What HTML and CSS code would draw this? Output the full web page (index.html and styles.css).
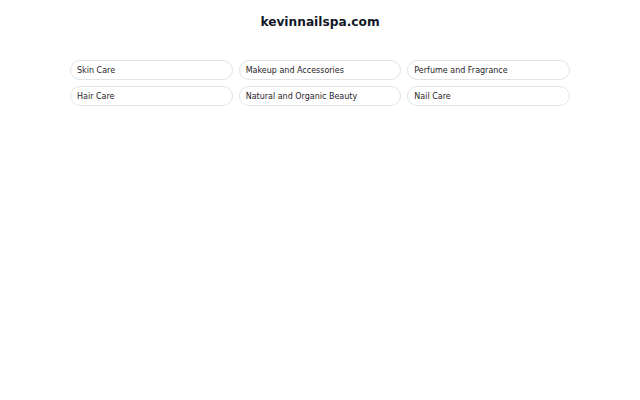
FILE: index.html
```html
<!DOCTYPE html>
<html lang="en">
<head>
<meta charset="utf-8">
<title>kevinnailspa.com</title>
<link rel="stylesheet" href="styles.css">
</head>
<body>
<header class="header">
  <h1 class="title">kevinnailspa.com</h1>
</header>
<main class="grid">
  <a class="pill" href="#">Skin Care</a>
  <a class="pill" href="#">Makeup and Accessories</a>
  <a class="pill" href="#">Perfume and Fragrance</a>
  <a class="pill" href="#">Hair Care</a>
  <a class="pill" href="#">Natural and Organic Beauty</a>
  <a class="pill" href="#">Nail Care</a>
</main>
</body>
</html>
```

FILE: styles.css
```css
html, body {
  margin: 0;
  padding: 0;
  background: #ffffff;
  font-family: "DejaVu Sans", sans-serif;
}

.header {
  padding-top: 14px;
  display: flex;
  justify-content: center;
}

.title {
  margin: 0;
  font-size: 12.2px;
  line-height: 16px;
  font-weight: bold;
  color: #111827;
}

.grid {
  width: 500px;
  margin: 30px auto 0;
  display: grid;
  grid-template-columns: repeat(3, 1fr);
  gap: 6px;
}

.pill {
  display: flex;
  align-items: center;
  height: 20px;
  box-sizing: border-box;
  padding: 0 6px;
  border: 1px solid #e2e4e8;
  border-radius: 10px;
  color: #1f2328;
  font-size: 8px;
  text-decoration: none;
}
```
